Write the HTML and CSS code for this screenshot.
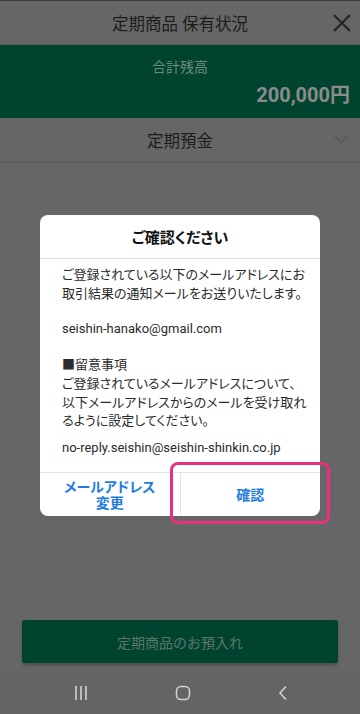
FILE: index.html
```html
<!DOCTYPE html>
<html lang="ja">
<head>
<meta charset="utf-8">
<title>定期商品 保有状況</title>
<link rel="stylesheet" href="styles.css">
</head>
<body>
<div class="app">
  <header class="header">
    <h1 class="header-title">定期商品 保有状況</h1>
    <button class="close" aria-label="閉じる">
      <svg width="18" height="18" viewBox="0 0 18 18"><path d="M1 1L17 17M17 1L1 17" stroke="#262626" stroke-width="2.4" fill="none"/></svg>
    </button>
  </header>
  <section class="summary">
    <div class="summary-label">合計残高</div>
    <div class="summary-amount">200,000円</div>
  </section>
  <div class="tab">
    <span class="tab-title">定期預金</span>
    <svg class="chevron" width="16" height="10" viewBox="0 0 16 10"><path d="M1 1.5L8 8.5L15 1.5" stroke="#5a5a5a" stroke-width="1.6" fill="none"/></svg>
  </div>
  <div class="spacer"></div>
  <div class="bottom">
    <button class="deposit">定期商品のお預入れ</button>
  </div>
  <nav class="navbar">
    <svg width="14" height="16" viewBox="0 0 14 16"><path d="M2 1V15M7 1V15M12 1V15" stroke="#d2d2d2" stroke-width="1.6"/></svg>
    <svg width="16" height="16" viewBox="0 0 16 16"><rect x="1.5" y="1.5" width="13" height="13" rx="4.5" stroke="#d2d2d2" stroke-width="1.6" fill="none"/></svg>
    <svg width="10" height="16" viewBox="0 0 10 16"><path d="M8 1.5L2 8L8 14.5" stroke="#d2d2d2" stroke-width="1.6" fill="none"/></svg>
  </nav>
</div>

<div class="modal-layer">
  <div class="dialog">
    <div class="dialog-title">ご確認ください</div>
    <div class="dialog-body">
      <p>ご登録されている以下のメールアドレスにお<br>取引結果の通知メールをお送りいたします。</p>
      <p>seishin-hanako@gmail.com</p>
      <p class="notice">■留意事項<br>ご登録されているメールアドレスについて、<br>以下メールアドレスからのメールを受け取れ<br>るように設定してください。</p>
      <p class="last">no-reply.seishin@seishin-shinkin.co.jp</p>
    </div>
    <div class="dialog-actions">
      <button class="action action-left">メールアドレス<br>変更</button>
      <button class="action">確認</button>
    </div>
  </div>
  <div class="highlight"></div>
</div>
</body>
</html>
```
FILE: styles.css
```css
* { box-sizing: border-box; }
html, body { margin: 0; padding: 0; }
body {
  width: 360px;
  height: 714px;
  overflow: hidden;
  font-family: Roboto, "Noto Sans CJK JP", sans-serif;
  background: #666666;
  position: relative;
}
button { font-family: inherit; border: 0; background: none; padding: 0; }

.app {
  height: 714px;
  display: flex;
  flex-direction: column;
  border-top: 1px solid #3a3a3a;
}
.header {
  height: 44px;
  display: flex;
  align-items: center;
  justify-content: center;
  position: relative;
  border-bottom: 1px solid #595959;
}
.header-title {
  margin: 0;
  font-size: 16.5px;
  font-weight: 400;
  color: #1c1c1c;
}
.close {
  position: absolute;
  right: 9px;
  top: 13px;
  width: 18px;
  height: 18px;
  display: flex;
}
.summary {
  height: 73px;
  background: #00432f;
  display: flex;
  flex-direction: column;
  padding: 13px 10px 0 10px;
}
.summary-label {
  text-align: center;
  font-size: 14px;
  color: #6c8c80;
  line-height: 18px;
}
.summary-amount {
  text-align: right;
  font-size: 20px;
  font-weight: 700;
  color: #8b8b8b;
  line-height: 24px;
  margin-top: 7px;
}
.tab {
  height: 45px;
  display: flex;
  align-items: center;
  justify-content: center;
  position: relative;
  border-bottom: 1px solid #595959;
}
.tab-title {
  font-size: 16.5px;
  color: #1c1c1c;
}
.chevron {
  position: absolute;
  right: 11px;
  top: 16px;
}
.spacer { flex: 1; }
.bottom {
  padding: 0 22px 9px;
}
.deposit {
  width: 100%;
  height: 43px;
  background: #00432f;
  border-radius: 3px;
  color: #5b776d;
  font-size: 14px;
  box-shadow: 0 2px 3px rgba(0,0,0,0.25);
}
.navbar {
  height: 42px;
  background: #646464;
  display: flex;
  align-items: center;
  justify-content: space-between;
  padding: 0 72px 0 74px;
}

.modal-layer {
  position: absolute;
  inset: 0;
  display: flex;
  justify-content: center;
  padding-top: 215px;
}
.dialog {
  width: 280px;
  height: 301px;
  background: #ffffff;
  border-radius: 8px;
  display: flex;
  flex-direction: column;
  overflow: hidden;
}
.dialog-title {
  height: 44px;
  flex: none;
  display: flex;
  align-items: center;
  justify-content: center;
  font-size: 15px;
  font-weight: 700;
  color: #111;
  border-bottom: 1px solid #dddddd;
  font-feature-settings: "palt";
}
.dialog-body {
  flex: 1;
  padding: 7px 6px 0 22px;
  font-size: 13px;
  line-height: 18.7px;
  color: #2b2b2b;
  white-space: nowrap;
  font-feature-settings: "palt";
}
.dialog-body p { margin: 0 0 17px; }
.dialog-body p.notice { margin-bottom: 8px; }
.dialog-body p.last { margin: 0; }
.dialog-actions {
  height: 44px;
  flex: none;
  display: flex;
  border-top: 1px solid #e3e3e3;
}
.action {
  flex: 1;
  font-size: 14px;
  font-weight: 700;
  color: #1f7ddf;
  line-height: 16px;
  font-feature-settings: "palt";
}
.action-left { border-right: 1px solid #e3e3e3; }
.highlight {
  position: absolute;
  left: 170px;
  top: 462px;
  width: 160px;
  height: 62px;
  border: 3px solid #e8307c;
  border-radius: 8px;
}
```
